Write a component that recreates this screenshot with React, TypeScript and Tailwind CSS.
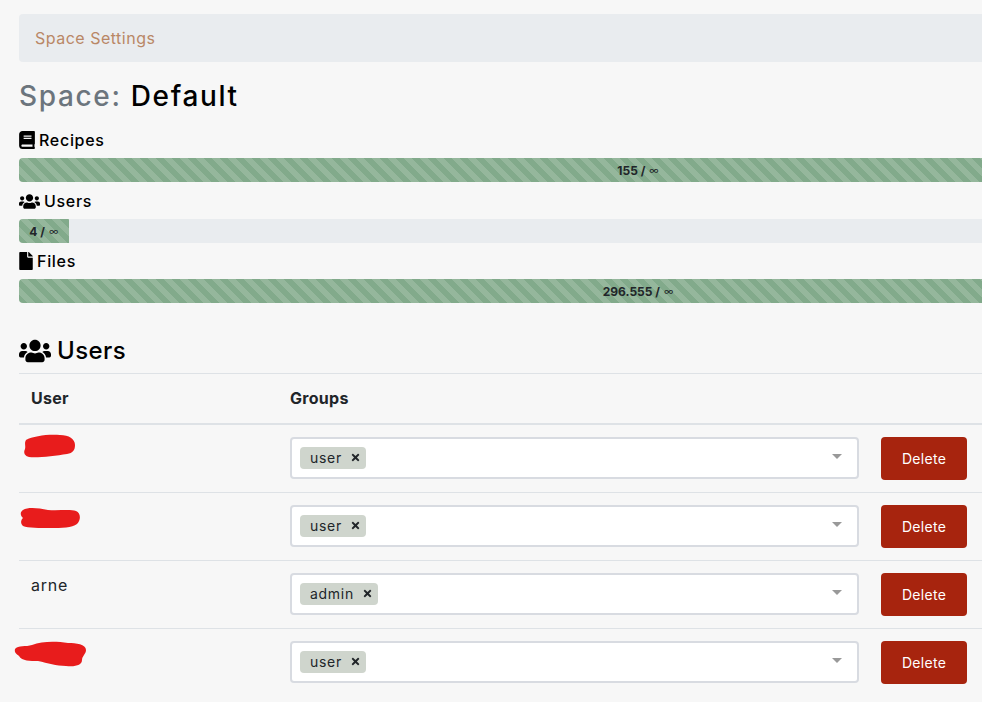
import React from 'react';
import { FaBook, FaFile, FaTimes, FaUsers } from 'react-icons/fa';

const stripes =
  'bg-[#82aa8b] bg-[linear-gradient(45deg,rgba(255,255,255,0.15)_25%,transparent_25%,transparent_50%,rgba(255,255,255,0.15)_50%,rgba(255,255,255,0.15)_75%,transparent_75%,transparent)] bg-[length:16px_16px]';

const limits = [
  { label: 'Recipes', icon: <FaBook size={18} className="-ml-[1px] mr-[3px]" />, value: '155', width: 'w-full', gap: 'mb-[7px]' },
  { label: 'Users', icon: <FaUsers size={21} className="mr-[4px]" />, value: '4', width: 'w-[4%]', gap: 'mb-[6px]' },
  { label: 'Files', icon: <FaFile size={18} className="-ml-[2px] mr-[2px]" />, value: '296.555', width: 'w-full', gap: 'mb-0' },
];

// hand drawn red marks over the user names
const scribbles: Record<string, React.ReactNode> = {
  one: (
    <svg className="absolute left-[4px] top-[9px]" width="54" height="26" viewBox="0 0 54 26">
      <path
        d="M3 6 C10 2 25 0 37 1 C46 1 52 5 52 11 C52 16 50 19 44 20 C32 22 14 24 6 23 C2 22 0 19 2 15 C3 12 1 9 3 6 Z"
        fill="#e81c1c"
      />
    </svg>
  ),
  two: (
    <svg className="absolute left-[1px] top-[14px]" width="62" height="24" viewBox="0 0 62 24">
      <path
        d="M3 3 C8 0 18 1 28 3 C38 4 50 2 56 4 C61 6 61 13 57 17 C52 21 42 21 30 21 C20 21 8 21 3 19 C0 16 1 13 3 11 C0 8 0 5 3 3 Z"
        fill="#e81c1c"
      />
    </svg>
  ),
  three: (
    <svg className="absolute left-[-5px] top-[12px]" width="74" height="28" viewBox="0 0 74 28">
      <path
        d="M1 8 C4 4 12 6 18 4 C28 0 42 0 54 2 C62 2 72 3 72 9 C72 13 68 15 68 19 C68 24 62 26 52 25 C42 25 34 22 24 20 C16 20 8 20 5 15 C3 13 0 12 1 8 Z"
        fill="#e81c1c"
      />
    </svg>
  ),
};

const users = [
  { id: 1, scribble: 'one', name: '', group: 'user' },
  { id: 2, scribble: 'two', name: '', group: 'user' },
  { id: 3, scribble: '', name: 'arne', group: 'admin' },
  { id: 4, scribble: 'three', name: '', group: 'user' },
];

const App: React.FC = () => {
  return (
    <div className="h-[702px] w-[982px] overflow-hidden bg-[#f7f7f7] font-['Inter','Liberation_Sans',sans-serif] text-[#212529]">
      <div className="w-[1238px] ml-[19px] pt-[14px]">
        {/* Breadcrumb */}
        <div className="h-12 flex items-center px-4 rounded bg-[#e9ecef] text-[#b98766] text-base tracking-[0.5px]">
          Space Settings
        </div>

        <h3 className="mt-[15px] text-[28px] leading-[38px] font-medium text-black tracking-[1.65px]">
          <span className="text-[#6c757d]">Space:</span> Default
        </h3>

        {/* Limits */}
        <div className="mt-[13px]">
          {limits.map((limit) => (
            <div key={limit.label} className={limit.gap}>
              <div className="flex items-center h-6 text-base font-medium leading-6 text-black mb-[6px] tracking-[0.7px]">
                {limit.icon}
                <span>{limit.label}</span>
              </div>
              <div className="h-6 rounded bg-[#e9ecef] overflow-hidden">
                <div
                  className={`h-6 pt-[1px] ${limit.width} ${stripes} flex items-center justify-center gap-1 text-xs font-bold text-[#212529]`}
                >
                  <span>{limit.value} /</span>
                  <span className="text-[10px] font-normal">∞</span>
                </div>
              </div>
            </div>
          ))}
        </div>

        <h3 className="mt-[28px] h-[38px] pt-[2px] flex items-center gap-[6px] text-2xl font-medium text-black tracking-[0.4px]">
          <FaUsers size={32} />
          <span>Users</span>
        </h3>

        {/* Users table */}
        <table className="mt-[4px] w-[1238px] table-fixed border-collapse">
          <thead>
            <tr className="h-[50px] border-t border-[#dee2e6] border-b-2">
              <th className="w-[259px] px-3 text-left text-base font-bold tracking-[0.3px]">User</th>
              <th className="w-[593px] px-3 text-left text-base font-bold tracking-[0.3px]">Groups</th>
              <th />
            </tr>
          </thead>
          <tbody>
            {users.map((user) => (
              <tr key={user.id} className="border-b border-[#dee2e6] last:border-b-0">
                <td className="relative px-3 pt-3 pb-3 align-top text-base leading-6 tracking-[0.8px]">
                  {user.name}
                  {user.scribble && scribbles[user.scribble]}
                </td>
                <td className="p-3 align-top">
                  <div className="relative h-[42px] rounded border-2 border-[#d8dbe1] bg-white flex items-center pl-2">
                    <span className="h-[22px] flex items-center rounded bg-[#cfd5cd] pl-[10px] pr-[5px] text-sm tracking-[0.7px]">
                      <span className="mr-[8px]">{user.group}</span>
                      <FaTimes size={11} />
                    </span>
                    <span className="absolute right-[15px] top-[15px] w-0 h-0 border-x-[5px] border-x-transparent border-t-[5px] border-t-[#999999]" />
                  </div>
                </td>
                <td className="pl-[10px] pr-3 py-3 align-top">
                  <button className="h-[43px] w-[86px] pt-[2px] rounded-sm bg-[#a7240e] text-white text-sm tracking-[0.3px]">
                    Delete
                  </button>
                </td>
              </tr>
            ))}
          </tbody>
        </table>
      </div>
    </div>
  );
};

export default App;
